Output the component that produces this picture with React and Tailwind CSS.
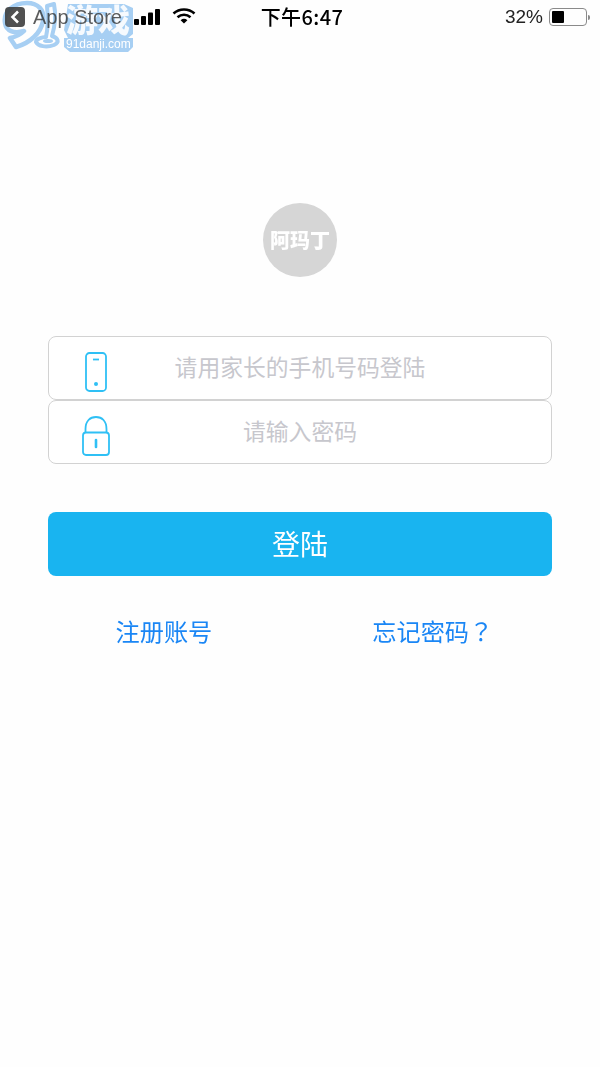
const cjk = "font-['Noto_Sans_CJK_SC','Noto_Sans',sans-serif]";

function Signal() {
  return (
    <svg width="27" height="16" viewBox="0 0 27 16" className="shrink-0">
      <rect x="0" y="10" width="5" height="6" rx="1" fill="#000" />
      <rect x="7" y="7" width="5" height="9" rx="1" fill="#000" />
      <rect x="14" y="3.5" width="5" height="12.5" rx="1" fill="#000" />
      <rect x="21" y="0" width="5" height="16" rx="1" fill="#000" />
    </svg>
  );
}

function Wifi() {
  return (
    <svg width="24" height="16" viewBox="0 0 24 16" className="mb-[2px] shrink-0">
      <path d="M1.5 5.5C7.5 0.2 16.5 0.2 22.5 5.5" fill="none" stroke="#000" strokeWidth="2.6" />
      <path d="M5.5 9.2C9.3 6 14.7 6 18.5 9.2" fill="none" stroke="#000" strokeWidth="2.6" />
      <path d="M8.6 12.2L12 15.6L15.4 12.2C13.4 10.4 10.6 10.4 8.6 12.2Z" fill="#000" />
    </svg>
  );
}

// site watermark stamped in the corner, the status bar sits on top so it stays readable
function Watermark() {
  return (
    <div className="absolute left-0 top-0 h-[56px] w-[136px] pointer-events-none">
      <svg width="136" height="56" viewBox="0 0 136 56" className="absolute left-0 top-0 mix-blend-multiply">
        <path
          d="M5 23C3 11 14 3 27 3C38 3 45 10 43 21C41 33 30 43 16 47L10 38C16 37 21 34 24 31C14 34 6 31 5 23Z"
          fill="none"
          stroke="#a8d0f4"
          strokeWidth="4.5"
          strokeLinejoin="round"
        />
        <path
          d="M47 6L54 4C56 14 55 26 52 36C58 38 60 42 54 45C46 48 38 46 36 42C36 39 42 37 46 37C48 28 48 16 47 6Z"
          fill="none"
          stroke="#a8d0f4"
          strokeWidth="4"
          strokeLinejoin="round"
        />
        <ellipse cx="48" cy="41" rx="5" ry="2" fill="#a8d0f4" />
        <path d="M68 4H124L133 8V34L128 38H133V47L128 52H70L64 47V38H68L64 30Z" fill="#a8d0f4" />
      </svg>
      <span className={`absolute left-[66px] top-[-2px] text-[32px] leading-[40px] font-black text-white/90 ${cjk}`}>游戏</span>
      <span className="absolute left-[66px] top-[37px] text-[12px] leading-[14px] text-white font-['Liberation_Sans',sans-serif]">91danji.com</span>
    </div>
  );
}

function StatusBar() {
  return (
    <div className="relative flex h-[34px] items-center justify-between pl-[5px] pr-[10px] text-black">
      <div className="flex w-[200px] items-center">
        <div className="flex h-[20px] w-[20px] items-center justify-center rounded-[4px] bg-[#3d3d3d]/90">
          <svg width="10" height="14" viewBox="0 0 10 14">
            <path d="M8 1.5L2.5 7L8 12.5" fill="none" stroke="#fff" strokeWidth="2.6" />
          </svg>
        </div>
        <span className="ml-[8px] text-[20px] whitespace-nowrap text-[#333]/80 font-['Liberation_Sans',sans-serif]">App Store</span>
        <div className="ml-[12px] flex items-center gap-[11px]">
          <Signal />
          <Wifi />
        </div>
      </div>
      <span className={`ml-[9px] text-[20px] font-medium tracking-[0.4px] ${cjk}`}>下午6:47</span>
      <div className="flex w-[200px] items-center justify-end gap-[6px]">
        <span className="text-[19px] text-[#222] font-['Liberation_Sans',sans-serif]">32%</span>
        <div className="flex items-center">
          <div className="flex h-[18px] w-[38px] items-center rounded-[4px] border border-[#8a8a8a] p-[2px]">
            <div className="h-full w-[12px] rounded-[1px] bg-black" />
          </div>
          <div className="ml-[1px] h-[5px] w-[2px] rounded-r-sm bg-[#8a8a8a]" />
        </div>
      </div>
    </div>
  );
}

function PhoneIcon() {
  return (
    <svg width="22" height="40" viewBox="0 0 22 40">
      <rect x="1" y="1" width="20" height="38" rx="3.5" fill="none" stroke="#2fc0f5" strokeWidth="1.8" />
      <path d="M8 7.5H14" stroke="#2fc0f5" strokeWidth="1.8" />
      <circle cx="11" cy="32" r="2" fill="#2fc0f5" />
    </svg>
  );
}

function LockIcon() {
  return (
    <svg width="28" height="40" viewBox="0 0 28 40">
      <path d="M3.5 17V13C3.5 5 8 1 14 1C20 1 24.5 5 24.5 13V17" fill="none" stroke="#2fc0f5" strokeWidth="1.8" />
      <rect x="1" y="16.5" width="26" height="22.5" rx="3" fill="none" stroke="#2fc0f5" strokeWidth="1.8" />
      <path d="M14 24V31" stroke="#2fc0f5" strokeWidth="2.6" strokeLinecap="round" />
    </svg>
  );
}

function Field({ icon, placeholder }) {
  return (
    <div className="relative flex h-[64px] items-center justify-center rounded-[8px] border border-[#d2d2d2] bg-white pb-[2px]">
      <div className="absolute left-[33px] top-[15px] flex w-[28px] justify-center">{icon}</div>
      <span className={`text-[22.8px] text-[#c7c7cd] ${cjk}`}>{placeholder}</span>
    </div>
  );
}

export default function App() {
  return (
    <div className={`relative h-[1067px] w-[600px] overflow-hidden bg-[#fefefe] ${cjk}`}>
      <Watermark />
      <StatusBar />

      <div className="mt-[169px] flex justify-center">
        <div className="flex h-[74px] w-[74px] items-center justify-center rounded-full bg-[#d6d6d6]">
          <span className="text-[20px] font-black text-white">阿玛丁</span>
        </div>
      </div>

      <div className="mx-[48px] mt-[59px] flex flex-col">
        <Field icon={<PhoneIcon />} placeholder="请用家长的手机号码登陆" />
        <Field icon={<LockIcon />} placeholder="请输入密码" />

        <button className="mt-[48px] h-[64px] rounded-[8px] bg-[#19b4f0] pb-[2px] text-[28px] text-white">登陆</button>

        <div className="mt-[37px] flex text-[24.2px] leading-[36px] text-[#1a86f5]">
          <span className="ml-[67.5px]">注册账号</span>
          <span className="ml-[160px]">
            忘记密码<span className="font-['Noto_Sans_CJK_TC',sans-serif]">？</span>
          </span>
        </div>
      </div>
    </div>
  );
}
